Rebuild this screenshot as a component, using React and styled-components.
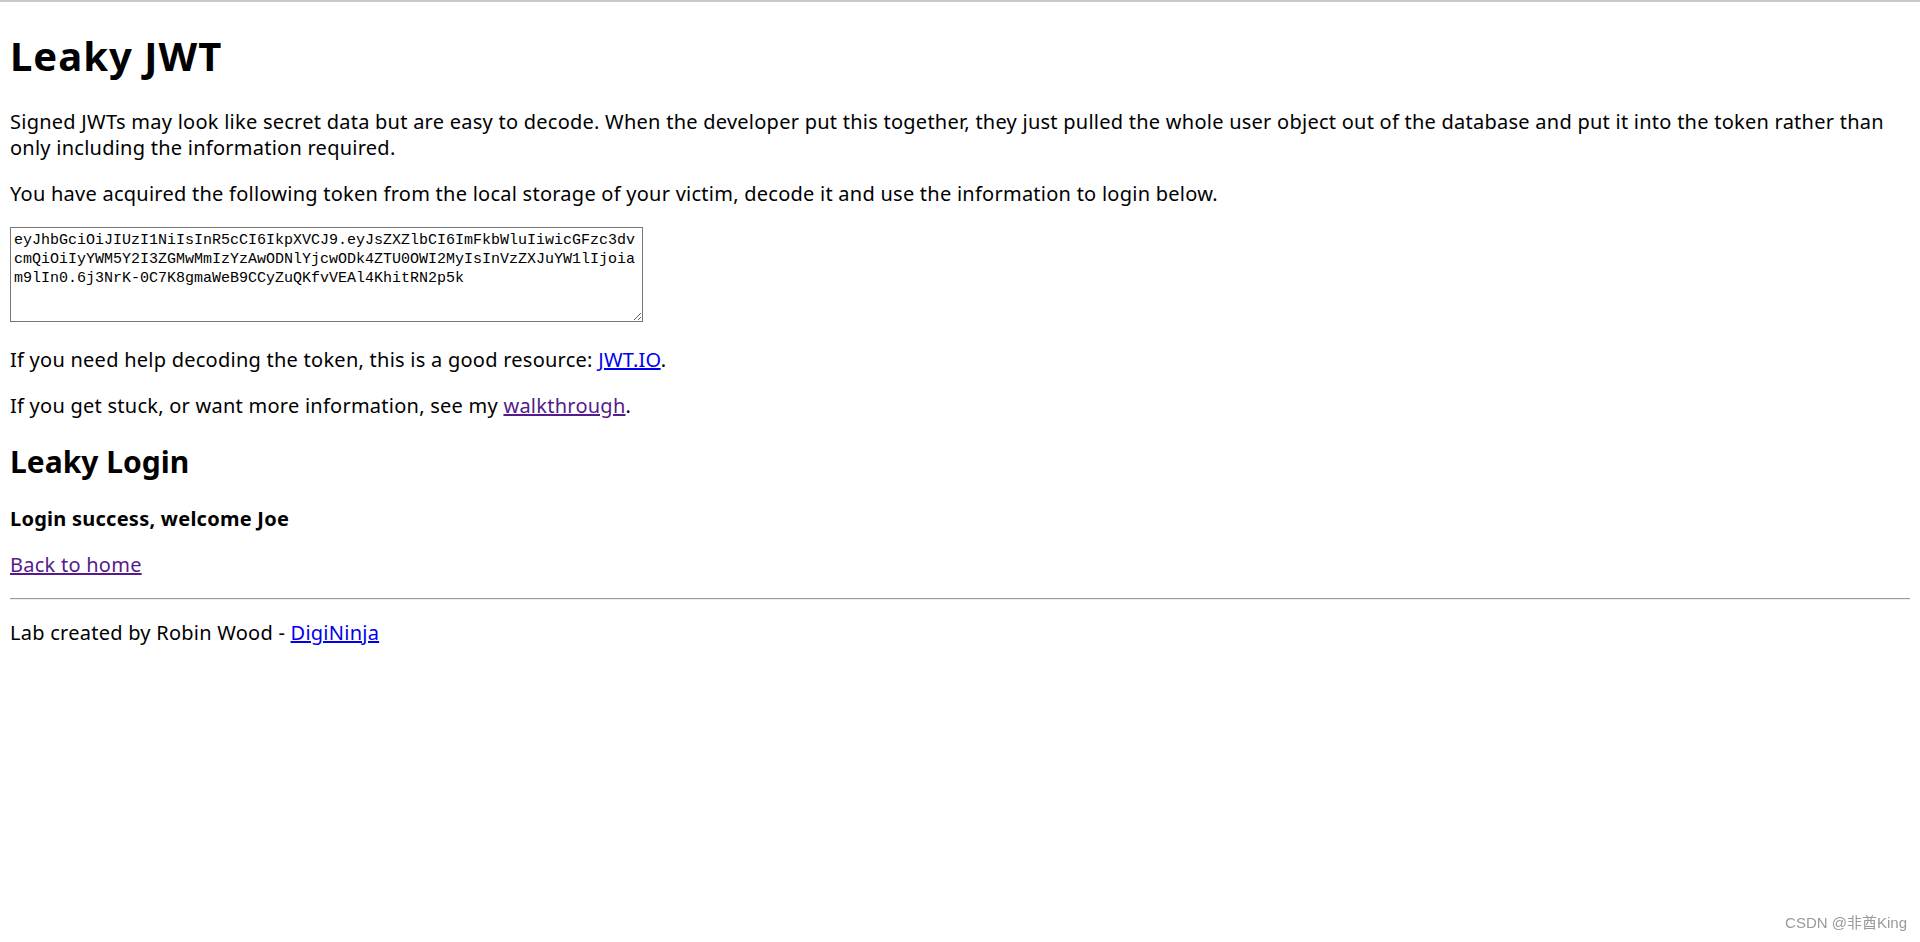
import styled, { createGlobalStyle } from 'styled-components';

const TOKEN =
  'eyJhbGciOiJIUzI1NiIsInR5cCI6IkpXVCJ9.eyJsZXZlbCI6ImFkbWluIiwicGFzc3dvcmQiOiIyYWM5Y2I3ZGMwMmIzYzAwODNlYjcwODk4ZTU0OWI2MyIsInVzZXJuYW1lIjoiam9lIn0.6j3NrK-0C7K8gmaWeB9CCyZuQKfvVEAl4KhitRN2p5k';

const GlobalStyle = createGlobalStyle`
  html {
    border-top: 2px solid #c8c8c8;
    background: #fff;
  }
  body {
    margin: 0 10px 10px;
    font-family: "Noto Sans", sans-serif;
    font-size: 20px;
    line-height: 26px;
    letter-spacing: 0.25px;
    color: #000;
  }
`;

const Page = styled.main`
  display: block;
`;

const Title = styled.h1`
  font-size: 40px;
  line-height: 53px;
  font-weight: 700;
  letter-spacing: 1px;
  margin: 27px 0;
`;

const SubTitle = styled.h2`
  font-size: 30px;
  line-height: 38px;
  font-weight: 700;
  letter-spacing: 0;
  margin: 24px 0 25px;
`;

const Text = styled.p`
  margin: 20px 0;
  font-weight: ${(p) => (p.$bold ? 700 : 400)};
`;

const TokenBox = styled.textarea`
  display: block;
  box-sizing: border-box;
  width: 633px;
  height: 95px;
  margin: 20px 0 25px;
  padding: 3px 3px 2px;
  border: 1px solid #767676;
  border-radius: 0;
  font-family: "Liberation Mono", monospace;
  font-size: 15px;
  line-height: 19px;
  letter-spacing: 0;
  color: #000;
  background: #fff;
  word-break: break-all;
  resize: both;
`;

const A = styled.a`
  color: ${(p) => (p.$visited ? '#551a8b' : '#0000ee')};
  text-decoration: underline;
`;

const Rule = styled.hr`
  margin: 20px 0;
  border: 0;
  border-top: 1px solid #9a9a9a;
  border-bottom: 1px solid #eeeeee;
  height: 0;
`;

const Watermark = styled.div`
  position: fixed;
  right: 13px;
  bottom: 9px;
  font-family: "Liberation Sans", "Noto Sans CJK SC", sans-serif;
  font-size: 15px;
  line-height: 20px;
  letter-spacing: 0;
  color: #9a9a9a;
`;

export default function App() {
  return (
    <>
      <GlobalStyle />
      <Page>
        <Title>Leaky JWT</Title>
        <Text>
          Signed JWTs may look like secret data but are easy to decode. When the developer put this
          together, they just pulled the whole user object out of the database and put it into the
          token rather than only including the information required.
        </Text>
        <Text>
          You have acquired the following token from the local storage of your victim, decode it and
          use the information to login below.
        </Text>
        <TokenBox defaultValue={TOKEN} readOnly />
        <Text>
          If you need help decoding the token, this is a good resource: <A href="#">JWT.IO</A>.
        </Text>
        <Text>
          If you get stuck, or want more information, see my <A href="#" $visited>walkthrough</A>.
        </Text>
        <SubTitle>Leaky Login</SubTitle>
        <Text $bold>Login success, welcome Joe</Text>
        <Text>
          <A href="#" $visited>Back to home</A>
        </Text>
        <Rule />
        <Text>
          Lab created by Robin Wood - <A href="#">DigiNinja</A>
        </Text>
      </Page>
      <Watermark>CSDN @非酋King</Watermark>
    </>
  );
}
